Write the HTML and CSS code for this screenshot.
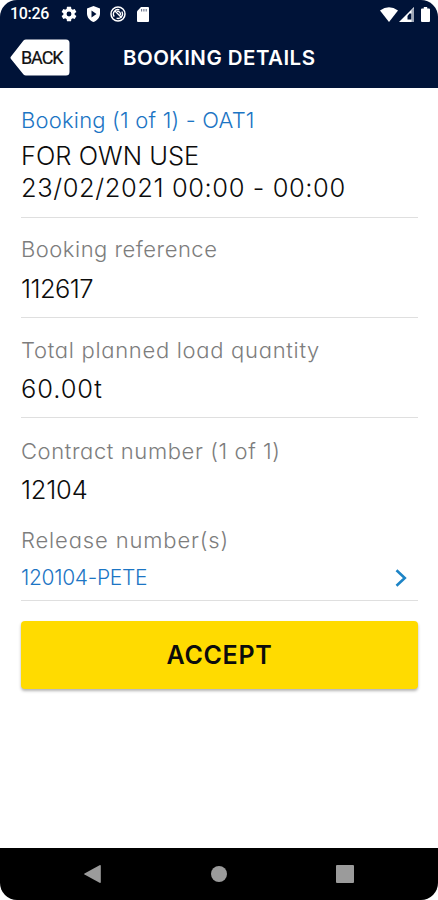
FILE: index.html
```html
<!DOCTYPE html>
<html lang="en">
<head>
  <meta charset="UTF-8">
  <meta name="viewport" content="width=device-width, initial-scale=1.0">
  <title>Booking Details</title>
  <link rel="stylesheet" href="styles.css">
</head>
<body>
  <div class="phone">

    <!-- Status bar and title -->
    <header class="header">
      <div class="status-bar">
        <span class="time">10:26</span>
        <svg class="icon-gear" width="16" height="16" viewBox="1.500 1.500 21 21"><path fill="#fff" fill-rule="evenodd" d="M19.4 13a7.500 7.500 0 0 0 0-2l2.300-1.700-2.200-3.800-2.700 1a7.500 7.500 0 0 0-1.700-1L14.700 2.500H9.300l-.4 3a7.500 7.500 0 0 0-1.700 1l-2.700-1-2.200 3.800L4.600 11a7.500 7.500 0 0 0 0 2l-2.300 1.700 2.200 3.800 2.700-1a7.500 7.500 0 0 0 1.700 1l.4 3h5.400l.4-3a7.500 7.500 0 0 0 1.700-1l2.700 1 2.200-3.800zM12 15.200a3.200 3.200 0 1 1 0-6.400 3.200 3.200 0 0 1 0 6.400z"/></svg>
        <svg class="icon-shield" width="15" height="16" viewBox="0 0 15 16"><path fill="#fff" fill-rule="evenodd" d="M7.500 0 14 2.500V7.500C14 11.500 11 14.800 7.500 16 4 14.800 1 11.500 1 7.500V2.500zM5.500 4.500v7l5-3.500z"/></svg>
        <svg class="icon-sync" width="16" height="16" viewBox="0 0 16 16" fill="none" stroke="#fff"><circle cx="8" cy="8" r="7" stroke-width="1.500"/><path stroke-width="1.300" d="M4.200 10.600a4.500 4.500 0 0 1 5.200-6.800M11.800 5.500a4.500 4.500 0 0 1-5.200 6.700M4.500 4.500l7.200 7.200M7 5.500a2.700 2.700 0 0 1 3.300 3.500"/></svg>
        <svg class="icon-card" width="12" height="15" viewBox="0 0 12 15"><path fill="#fff" d="M4 0h7a1 1 0 0 1 1 1v13a1 1 0 0 1-1 1H1a1 1 0 0 1-1-1V4.200z"/><path stroke="#001338" stroke-opacity=".6" stroke-width="1.100" d="M4.600 2v2.500M6.900 2v2.500M9.200 2v2.500"/></svg>
        <svg class="icon-wifi" width="18" height="15" viewBox="0 0 18 15"><path fill="#fff" d="M9 15 0 3.600Q9-3.200 18 3.600z"/></svg>
        <svg class="icon-signal" width="15" height="15" viewBox="0 0 15 15"><path fill="#fff" d="M15 0v15H0z"/><path fill="#001338" d="M10.500 6.500h2v6H8.500V9z"/><path fill="#9da5b5" d="M12.500 3v12H15V1z"/></svg>
        <svg class="icon-battery" width="9" height="15" viewBox="0 0 9 15"><path fill="#fff" d="M2.800 0h3.400v1.500H8a1 1 0 0 1 1 1V14a1 1 0 0 1-1 1H1a1 1 0 0 1-1-1V2.500a1 1 0 0 1 1-1h1.800z"/></svg>
      </div>
      <div class="title-bar">
        <a class="back">
          <svg class="back-shape" width="60" height="38" viewBox="0 0 60 38"><path fill="#fff" d="M13.500 1.500Q14.500.5 16 .5H56a3.500 3.500 0 0 1 3.500 3.500V33a3.500 3.500 0 0 1-3.500 3.500H16q-1.500 0-2.500-1L.8 19.800q-.8-1 0-2z"/></svg>
          <span class="back-text">BACK</span>
        </a>
        <h1 class="title">BOOKING DETAILS</h1>
      </div>
    </header>

    <!-- Booking data -->
    <main class="content">
      <section class="group group-booking">
        <p class="label link"><span class="t-booking">Booking (1 of 1) - OAT1</span></p>
        <p class="value"><span class="t-use">FOR OWN USE</span></p>
        <p class="value"><span class="t-date">23/02/2021 00:00 - 00:00</span></p>
      </section>
      <section class="group group-reference">
        <p class="label"><span class="t-reference">Booking reference</span></p>
        <p class="value"><span class="t-reference-no">112617</span></p>
      </section>
      <section class="group group-quantity">
        <p class="label"><span class="t-quantity">Total planned load quantity</span></p>
        <p class="value"><span class="t-load">60.00t</span></p>
      </section>
      <section class="group group-contract">
        <p class="label"><span class="t-contract">Contract number (1 of 1)</span></p>
        <p class="value"><span class="t-contract-no">12104</span></p>
        <p class="label release"><span class="t-release">Release number(s)</span></p>
        <a class="label link release-row">
          <span class="t-release-no">120104-PETE</span>
          <svg width="12" height="18" viewBox="0 0 12 18"><path fill="none" stroke="#1d84c6" stroke-width="2.600" d="M1.500 1.200 9.800 9l-8.300 7.800"/></svg>
        </a>
      </section>
      <button class="accept">ACCEPT</button>
    </main>

    <!-- Android navigation -->
    <nav class="nav-bar">
      <svg width="17" height="18" viewBox="0 0 17 18"><path fill="#9b9b9b" d="M16 0q.8 0 .8.800v16.400q0 .8-.8.800L.5 9.500q-.7-.5 0-1z"/></svg>
      <svg width="17" height="18" viewBox="0 0 17 18"><circle fill="#9b9b9b" cx="9" cy="9" r="8"/></svg>
      <svg width="18" height="18" viewBox="0 0 18 18"><rect fill="#9b9b9b" width="18" height="18" rx="1"/></svg>
    </nav>
  </div>
</body>
</html>
```
FILE: styles.css
```css
body {
  margin: 0;
  background: #fff;
  font-family: Inter, "Liberation Sans", sans-serif;
}
p, h1 {
  margin: 0;
}
.phone {
  display: flex;
  flex-direction: column;
  height: 900px;
  border-radius: 17px;
  overflow: hidden;
  background: #fff;
}

/* Header */
.header {
  height: 88px;
  background: #001338;
  color: #fff;
}
.status-bar {
  display: flex;
  align-items: center;
  height: 28px;
  padding: 0 8px 0 10px;
}
.time {
  width: 39px;
  font: 500 16px/28px Roboto, sans-serif;
  letter-spacing: -0.3px;
  white-space: nowrap;
}
.icon-gear {
  margin-left: 12px;
}
.icon-shield {
  margin-left: 9px;
}
.icon-sync {
  margin-left: 9px;
}
.icon-card {
  margin-left: 11px;
}
.icon-wifi {
  margin-left: auto;
}
.icon-signal {
  margin-left: 1px;
}
.icon-battery {
  margin-left: 7px;
}
.title-bar {
  display: grid;
  grid-template-columns: 60px 1fr;
  align-items: center;
  height: 60px;
  padding: 0 10px;
}
.back {
  display: grid;
  align-items: center;
}
.back-shape, .back-text {
  grid-area: 1 / 1;
}
.back-text {
  padding-left: 11px;
  color: #111;
  font: 400 18px/38px Roboto, sans-serif;
  letter-spacing: -1.1px;
  -webkit-text-stroke: 0.2px #111;
}
.title {
  padding-left: 53px;
  font-size: 20.5px;
  line-height: 30px;
  font-weight: 600;
  letter-spacing: 0.45px;
  white-space: nowrap;
}

/* Booking data */
.content {
  flex: 1;
  padding: 0 20px 0 21px;
}
.group {
  border-bottom: 1px solid #dfdfdf;
}
.group-booking {
  padding: 18px 0 13px;
}
.group-booking .label {
  margin-bottom: 6px;
}
.group-reference {
  padding: 17px 0 12px;
}
.group-quantity {
  padding: 18px 0 12px;
}
.group-quantity .label {
  margin-bottom: 9px;
}
.group-contract {
  padding: 19px 0 7px;
}
.label {
  margin-bottom: 10px;
  color: #7d7d7d;
  font-size: 22px;
  line-height: 28px;
  font-weight: 300;
  font-feature-settings: "cv11";
  white-space: nowrap;
}
.group-contract .label {
  margin-bottom: 9px;
}
.value {
  color: #0c0c0c;
  font-size: 25.5px;
  line-height: 32px;
  font-weight: 300;
  white-space: nowrap;
}
.label.link {
  color: #1c75c4;
}
.group-contract .release {
  margin-top: 20px;
}
.group-contract .release-row {
  display: flex;
  align-items: center;
  justify-content: space-between;
  margin: 0;
  padding-right: 11px;
  font-size: 21px;
  line-height: 30px;
}
.accept {
  display: block;
  width: 100%;
  height: 68px;
  margin-top: 20px;
  padding: 0;
  border: 0;
  border-radius: 4px;
  background: #ffdb00;
  box-shadow: 0 2px 3px rgba(0, 0, 0, 0.3);
  color: #0c0c0c;
  font: 600 25px/68px Inter, sans-serif;
  letter-spacing: 0.7px;
}

/* Tracking */
.t-booking {
  letter-spacing: 0.2px;
}
.t-date {
  letter-spacing: 0.58px;
}
.t-reference {
  letter-spacing: 0.5px;
}
.t-reference-no {
  letter-spacing: -0.55px;
}
.t-quantity {
  letter-spacing: 0.7px;
}
.t-load {
  letter-spacing: 0.9px;
}
.t-contract {
  letter-spacing: 0.6px;
}
.t-contract-no {
  letter-spacing: -0.2px;
}
.t-release {
  letter-spacing: 0.85px;
}
.t-release-no {
  letter-spacing: -0.3px;
}

/* Android navigation */
.nav-bar {
  display: flex;
  align-items: center;
  justify-content: space-between;
  height: 52px;
  padding: 0 84px;
  background: #000;
}
```
